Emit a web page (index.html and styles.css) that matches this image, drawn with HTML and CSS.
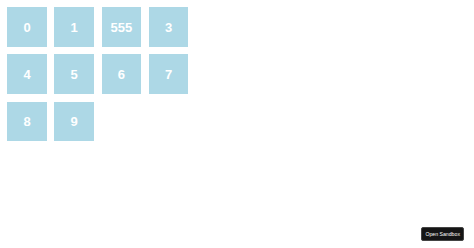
FILE: index.html
```html
<!DOCTYPE html>
<html lang="en">
<head>
    <meta charset="UTF-8">
    <meta name="viewport" content="width=device-width, initial-scale=1.0">
    <title>Grid</title>
    <link rel="stylesheet" href="styles.css">
</head>
<body>
    <div class="grid">
        <div class="item">0</div>
        <div class="item">1</div>
        <div class="item">555</div>
        <div class="item">3</div>
        <div class="item">4</div>
        <div class="item">5</div>
        <div class="item">6</div>
        <div class="item">7</div>
        <div class="item">8</div>
        <div class="item">9</div>
    </div>
    <a class="sandbox-btn" href="#">Open Sandbox</a>
</body>
</html>
```

FILE: styles.css
```css
body {
    margin: 0;
    font-family: "Liberation Sans", Arial, sans-serif;
    background: #fff;
}
.grid {
    display: grid;
    grid-template-columns: repeat(4, 39.5px);
    grid-auto-rows: 39.5px;
    gap: 7.7px;
    padding: 7.3px;
}
.item {
    display: flex;
    align-items: center;
    justify-content: center;
    background-color: #add8e6;
    color: #fff;
    font-size: 13px;
    font-weight: bold;
}
.sandbox-btn {
    position: fixed;
    right: 10px;
    bottom: 7px;
    display: flex;
    align-items: center;
    height: 14px;
    box-sizing: border-box;
    padding: 0 3px;
    background: #151515;
    color: #fff;
    font-size: 5.2px;
    text-decoration: none;
    border-radius: 2px;
    border: 1px solid #444;
}
```
